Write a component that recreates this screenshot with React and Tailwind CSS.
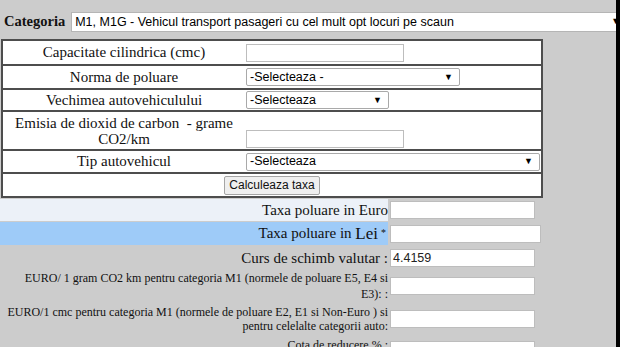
import React from "react";

const serif = { fontFamily: '"Liberation Serif", "Times New Roman", serif' };

function Sel({ w, text }) {
  return (
    <div
      className={`flex items-center justify-between h-[18px] bg-white border border-[#a9a9a9] rounded-[2px] pl-[3px] pr-[6px] text-[12.5px] text-black ${w}`}
      style={{ fontFamily: '"Liberation Sans", Arial, sans-serif' }}
    >
      <span className="leading-none">{text}</span>
      <span className="text-[9px] leading-none">▼</span>
    </div>
  );
}

function Inp({ w, h = "h-[18px]", value = "" }) {
  return (
    <div
      className={`flex items-center bg-white border border-[#bdbdbd] pl-[2px] text-[12.5px] text-[#222] ${w} ${h}`}
      style={{ fontFamily: '"Liberation Sans", Arial, sans-serif' }}
    >
      {value}
    </div>
  );
}

function Row({ h, label, children }) {
  return (
    <div className={`flex ${h} border-b-2 border-[#4d4d4d]`}>
      <div className="w-[242px] flex items-center justify-center text-center text-[15px] leading-[17px] text-[#111]">
        {label}
      </div>
      <div className="flex-1 flex items-center pl-[1px]">{children}</div>
    </div>
  );
}

export default function App() {
  return (
    <div className="w-[620px] h-[347px] overflow-hidden bg-[#cccccc] flex" style={serif}>
      <div className="w-[616px] overflow-hidden flex flex-col">
        {/* Categoria */}
        <div className="flex items-center h-[20px] mt-[12px] pl-[4px] gap-[6px] whitespace-nowrap">
          <span className="font-bold text-[14.5px] text-[#111]">Categoria</span>
          <div
            className="flex items-center justify-between shrink-0 w-[552px] h-[20px] bg-white border border-[#b5b5b5] pl-[3px] pr-[2px] text-[12.5px] text-black"
            style={{ fontFamily: '"Liberation Sans", Arial, sans-serif' }}
          >
            <span>M1, M1G - Vehicul transport pasageri cu cel mult opt locuri pe scaun</span>
            <span className="text-[9px]">▼</span>
          </div>
        </div>

        {/* main table */}
        <div className="mt-[7px] ml-[1px] w-[542px] bg-white border-2 border-[#4d4d4d]">
          <Row h="h-[25px]" label="Capacitate cilindrica (cmc)">
            <Inp w="w-[158px]" />
          </Row>
          <Row h="h-[24px]" label="Norma de poluare">
            <Sel w="w-[214px]" text="-Selecteaza -" />
          </Row>
          <Row h="h-[22px]" label="Vechimea autovehiculului">
            <Sel w="w-[143px]" text="-Selecteaza" />
          </Row>
          <div className="flex h-[39px] border-b-2 border-[#4d4d4d]">
            <div className="w-[242px] flex flex-col items-center justify-center text-center text-[15px] leading-[16px] text-[#111]">
              <span className="whitespace-pre">Emisia de dioxid de carbon  - grame</span>
              <span>CO2/km</span>
            </div>
            <div className="flex-1 flex items-end pb-[1px] pl-[1px]">
              <Inp w="w-[158px]" />
            </div>
          </div>
          <Row h="h-[23px]" label="Tip autovehicul">
            <Sel w="w-[294px]" text="-Selecteaza" />
          </Row>
          <div className="flex h-[22px] items-center justify-center">
            <div
              className="h-[19px] px-[4px] flex items-center bg-[#efefef] border border-[#a5a5a5] rounded-[2px] text-[12px] text-[#111]"
              style={{ fontFamily: '"Liberation Sans", Arial, sans-serif' }}
            >
              Calculeaza taxa
            </div>
          </div>
        </div>

        {/* lower section */}
        <div className="flex flex-col mt-[1px]">
          <div className="flex items-center h-[22px]">
            <div className="w-[388px] h-full bg-[#ecf1f8] flex items-center justify-end text-[15px] text-[#111]">
              Taxa poluare in Euro
            </div>
            <div className="ml-[2px]">
              <Inp w="w-[145px]" />
            </div>
          </div>
          <div className="flex items-center h-[23px] mt-[1px]">
            <div className="w-[388px] h-full bg-[#9ecbf8] flex items-center justify-end text-[15px] text-[#111] pr-[2px]">
              <span>Taxa poluare in&nbsp;</span>
              <span className="text-[17px]">Lei</span>
              <span className="text-[10px] self-start mt-[3px] ml-[3px]">*</span>
            </div>
            <div className="ml-[2px]">
              <Inp w="w-[151px]" />
            </div>
          </div>
          <div className="flex items-center h-[24px] mt-[1px]">
            <div className="w-[388px] flex items-center justify-end text-[15px] text-[#111]">
              Curs de schimb valutar :
            </div>
            <div className="ml-[2px]">
              <Inp w="w-[145px]" value="4.4159" />
            </div>
          </div>
          <div className="flex items-center h-[32px]">
            <div className="w-[388px] text-right text-[12px] leading-[16px] text-[#111] whitespace-nowrap">
              EURO/ 1 gram CO2 km pentru categoria M1 (normele de poluare E5, E4 si
              <br />
              E3): :
            </div>
            <div className="ml-[2px]">
              <Inp w="w-[145px]" />
            </div>
          </div>
          <div className="flex items-center h-[32px] mt-[1px]">
            <div className="w-[388px] text-right text-[12px] leading-[14px] text-[#111] whitespace-nowrap">
              EURO/1 cmc pentru categoria M1 (normele de poluare E2, E1 si Non-Euro ) si
              <br />
              pentru celelalte categorii auto:
            </div>
            <div className="ml-[2px]">
              <Inp w="w-[145px]" />
            </div>
          </div>
          <div className="flex items-start h-[30px] mt-[2px]">
            <div className="w-[388px] text-right text-[12px] leading-[14px] text-[#111] pt-[1px]">
              Cota de reducere % :
            </div>
            <div className="ml-[2px] mt-[4px]">
              <Inp w="w-[145px]" />
            </div>
          </div>
        </div>
      </div>
      <div className="w-[4px] h-full bg-black shrink-0" />
    </div>
  );
}
